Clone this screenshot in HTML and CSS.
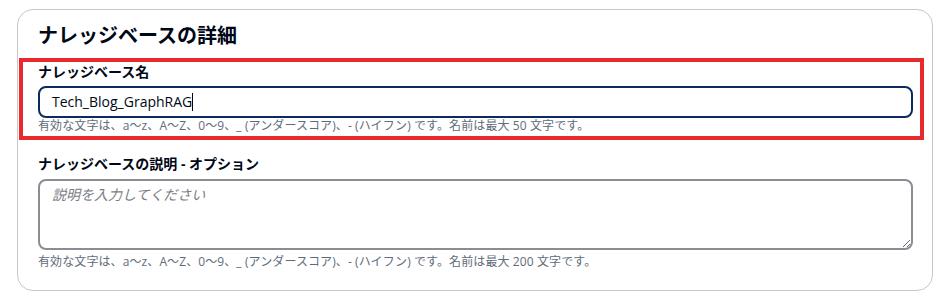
FILE: index.html
```html
<!DOCTYPE html>
<html lang="ja">
<head>
<meta charset="utf-8">
<title>ナレッジベースの詳細</title>
<link rel="stylesheet" href="styles.css">
</head>
<body>
<div class="card">
  <h2 class="card-title">ナレッジベースの詳細</h2>
  <div class="highlight">
    <div class="field">
      <div class="label">ナレッジベース名</div>
      <div class="input focused">Tech_Blog_GraphRAG<span class="caret"></span></div>
      <div class="hint">有効な文字は、a〜z、A〜Z、0〜9、_ (アンダースコア)、- (ハイフン) です。名前は最大 50 文字です。</div>
    </div>
  </div>
  <div class="field field-second">
    <div class="label">ナレッジベースの説明 - オプション</div>
    <textarea class="textarea" placeholder="説明を入力してください"></textarea>
    <div class="hint">有効な文字は、a〜z、A〜Z、0〜9、_ (アンダースコア)、- (ハイフン) です。名前は最大 200 文字です。</div>
  </div>
</div>
</body>
</html>
```
FILE: styles.css
```css
html, body {
  margin: 0;
  padding: 0;
  background: #ffffff;
}
body {
  font-family: "Open Sans", "Noto Sans CJK JP", sans-serif;
  color: #000716;
}
.card {
  box-sizing: border-box;
  margin: 9px 0 0 17px;
  width: 916px;
  height: 282px;
  border: 1px solid #c6c6cd;
  border-radius: 16px;
  padding: 12px 19px 0 20px;
}
.card-title {
  margin: 0;
  font-size: 20px;
  line-height: 28px;
  font-weight: 700;
}
.highlight {
  margin: 8px -11px 0 -19px;
  border: 4px solid #e8292d;
  padding: 0 7px 2px 15px;
}
.field {
  display: flex;
  flex-direction: column;
}
.label {
  font-size: 14px;
  line-height: 20px;
  font-weight: 700;
}
.input {
  box-sizing: border-box;
  margin-top: 4px;
  height: 32px;
  border: 2px solid #0b2a5f;
  border-radius: 8px;
  padding: 0 12px;
  font-size: 14px;
  line-height: 28px;
  color: #000716;
  display: flex;
  align-items: center;
}
.caret {
  display: inline-block;
  width: 1px;
  height: 18px;
  background: #000716;
}
.hint {
  font-size: 12px;
  line-height: 16px;
  letter-spacing: 0.1px;
  color: #5f6b7a;
}
.field-second {
  margin-top: 14px;
}
.textarea {
  box-sizing: border-box;
  display: block;
  margin: 5px 0 4px;
  width: 100%;
  height: 71px;
  border: 2px solid #8c8c94;
  border-radius: 8px;
  padding: 4px 12px;
  font-family: "Open Sans", "Noto Sans CJK JP", sans-serif;
  font-size: 14px;
  line-height: 20px;
  color: #000716;
  resize: vertical;
}
.textarea::placeholder {
  color: #7d7d86;
  font-style: italic;
}
```
